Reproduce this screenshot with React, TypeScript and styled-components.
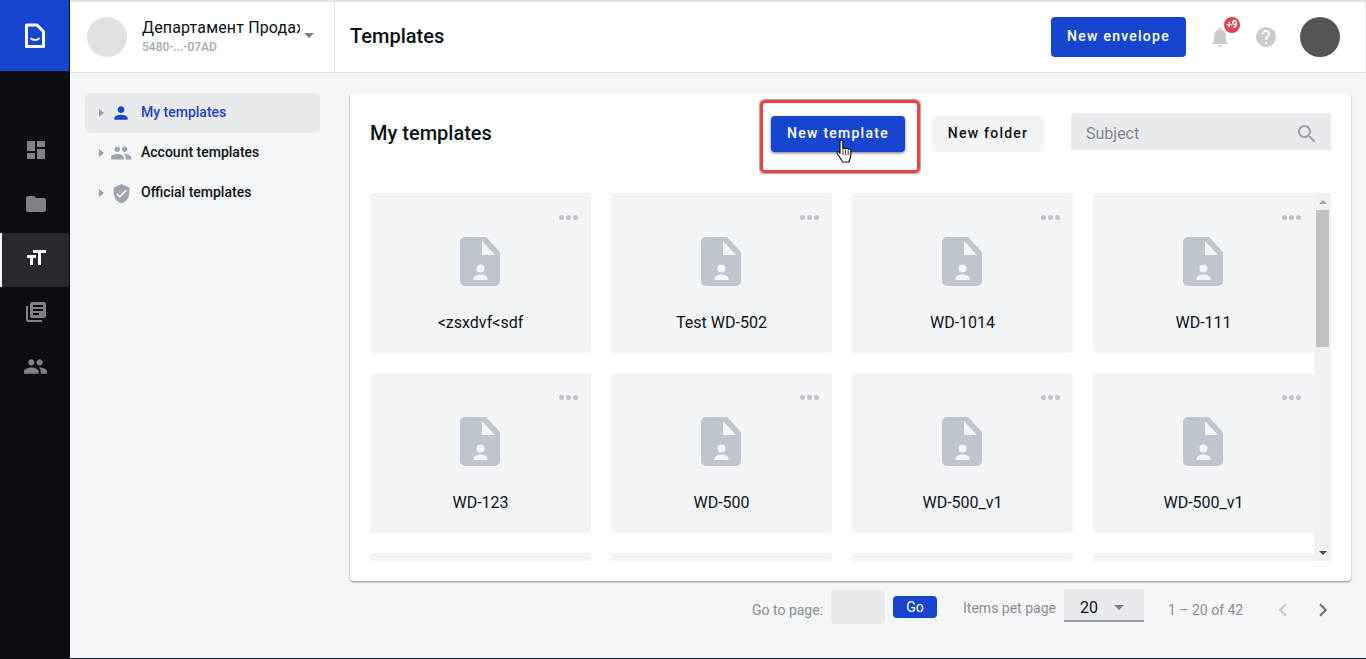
import React from "react";
import styled, { createGlobalStyle } from "styled-components";

const Global = createGlobalStyle`
  html, body { margin: 0; padding: 0; height: 100%; overflow: hidden; }
  body { font-family: Roboto, "Noto Sans", Arial, sans-serif; color: #0d1218; background: #f5f6f8; }
  * { box-sizing: border-box; }
`;

const P = {
  dashboard: "M3 13h8V3H3v10zm0 8h8v-6H3v6zm10 0h8V11h-8v10zm0-18v6h8V3h-8z",
  folder: "M10 4H4c-1.1 0-1.99.9-1.99 2L2 18c0 1.1.9 2 2 2h16c1.1 0 2-.9 2-2V8c0-1.1-.9-2-2-2h-8l-2-2z",
  size: "M9 4v3h5v12h3V7h5V4H9zm-6 8h3v7h3v-7h3V9H3v3z",
  books: "M4 6H2v14c0 1.1.9 2 2 2h14v-2H4V6zm16-4H8c-1.1 0-2 .9-2 2v12c0 1.1.9 2 2 2h12c1.1 0 2-.9 2-2V4c0-1.1-.9-2-2-2zm-1 9H9V9h10v2zm-4 4H9v-2h6v2zm4-8H9V5h10v2z",
  people: "M16 11c1.66 0 2.99-1.34 2.99-3S17.66 5 16 5c-1.66 0-3 1.34-3 3s1.34 3 3 3zm-8 0c1.66 0 2.99-1.34 2.99-3S9.66 5 8 5C6.34 5 5 6.34 5 8s1.34 3 3 3zm0 2c-2.33 0-7 1.17-7 3.5V19h14v-2.5c0-2.33-4.67-3.5-7-3.5zm8 0c-.29 0-.62.02-.97.05 1.16.84 1.97 1.97 1.97 3.45V19h6v-2.5c0-2.33-4.67-3.5-7-3.5z",
  person: "M12 12c2.21 0 4-1.79 4-4s-1.79-4-4-4-4 1.79-4 4 1.79 4 4 4zm0 2c-2.67 0-8 1.34-8 4v2h16v-2c0-2.66-5.33-4-8-4z",
  shield: "M12 1L3 5v6c0 5.55 3.84 10.74 9 12 5.16-1.26 9-6.45 9-12V5l-9-4zm-2 16l-4-4 1.41-1.41L10 14.17l6.59-6.59L18 9l-8 8z",
  bell: "M12 22c1.1 0 2-.9 2-2h-4c0 1.1.89 2 2 2zm6-6v-5c0-3.07-1.64-5.64-4.5-6.32V4c0-.83-.67-1.5-1.5-1.5s-1.5.67-1.5 1.5v.68C7.63 5.36 6 7.92 6 11v5l-2 2v1h16v-1l-2-2z",
  help: "M12 2C6.48 2 2 6.48 2 12s4.48 10 10 10 10-4.48 10-10S17.52 2 12 2zm1 17h-2v-2h2v2zm2.07-7.75l-.9.92C13.45 12.9 13 13.5 13 15h-2v-.5c0-1.1.45-2.1 1.17-2.83l1.24-1.26c.37-.36.59-.86.59-1.41 0-1.1-.9-2-2-2s-2 .9-2 2H8c0-2.21 1.79-4 4-4s4 1.79 4 4c0 .88-.36 1.68-.93 2.25z",
  search: "M15.5 14h-.79l-.28-.27C15.41 12.59 16 11.11 16 9.5 16 5.91 13.09 3 9.5 3S3 5.91 3 9.5 5.91 16 9.5 16c1.61 0 3.09-.59 4.23-1.57l.27.28v.79l5 4.99L20.49 19l-4.99-5zm-6 0C7.01 14 5 11.99 5 9.5S7.01 5 9.5 5 14 7.01 14 9.5 11.99 14 9.5 14z",
  left: "M15.41 7.41L14 6l-6 6 6 6 1.41-1.41L10.83 12z",
  right: "M10 6L8.59 7.41 13.17 12l-4.58 4.59L10 18l6-6z",
};

const Icon = ({ d, size = 24, color }: { d: string; size?: number; color: string }) => (
  <svg width={size} height={size} viewBox="0 0 24 24" fill={color} style={{ display: "block", flexShrink: 0 }}>
    <path d={d} />
  </svg>
);

const Shell = styled.div`
  display: flex;
  width: 1366px;
  height: 659px;
  overflow: hidden;
`;
const Sidebar = styled.nav`
  width: 70px;
  flex-shrink: 0;
  background: #0b0f14;
  display: flex;
  flex-direction: column;
`;
const Logo = styled.div`
  height: 71px;
  width: 69px;
  background: #1646cf;
  display: flex;
  align-items: center;
  justify-content: center;
  margin-bottom: 54px;
`;
const NavItem = styled.div<{ $active?: boolean }>`
  width: 69px;
  height: 54px;
  display: flex;
  align-items: center;
  justify-content: center;
  background: ${(p) => (p.$active ? "#26292e" : "transparent")};
  border-left: 2px solid ${(p) => (p.$active ? "#ffffff" : "transparent")};
  padding-bottom: 4px;
`;
const Column = styled.div`
  flex: 1;
  min-width: 0;
  display: flex;
  flex-direction: column;
  border-bottom: 1px solid #14202c;
`;
const Header = styled.header`
  height: 73px;
  flex-shrink: 0;
  background: #fff;
  border-top: 2px solid #e0e2e7;
  border-bottom: 1px solid #dfe1e6;
  border-right: 1px solid #e6e8eb;
  display: flex;
  align-items: center;
`;
const Org = styled.div`
  width: 265px;
  height: 100%;
  border-right: 1px solid #dfe1e6;
  display: flex;
  align-items: center;
  padding-left: 17px;
  padding-bottom: 1px;
`;
const OrgAvatar = styled.div`
  width: 40px;
  height: 40px;
  border-radius: 50%;
  background: #dfe2e5;
  flex-shrink: 0;
`;
const OrgInfo = styled.div`
  width: 158px;
  margin-left: 15px;
  overflow: hidden;
`;
const OrgName = styled.div`
  font-size: 16px;
  line-height: 20px;
  letter-spacing: 0.15px;
  white-space: nowrap;
  overflow: hidden;
  margin-top: -1px;
`;
const OrgId = styled.div`
  font-size: 12px;
  line-height: 14px;
  margin-top: 2px;
  font-weight: 500;
  color: #a5a9ae;
`;
const Caret = styled.div<{ $color?: string }>`
  width: 0;
  height: 0;
  border-left: 5px solid transparent;
  border-right: 5px solid transparent;
  border-top: 5px solid ${(p) => p.$color || "#7c7f84"};
`;
const OrgCaret = styled(Caret)`
  margin: 0 0 2px 4px;
`;
const PageTitle = styled.h1`
  flex: 1;
  margin: 0 0 0 15px;
  font-size: 20px;
  font-weight: 500;
  line-height: 24px;
  padding-bottom: 2px;
`;
const Button = styled.button<{ $variant?: "primary" | "soft" }>`
  height: 36px;
  border: 0;
  border-radius: 4px;
  font-family: inherit;
  font-size: 14px;
  font-weight: 500;
  letter-spacing: 1.25px;
  padding: 0 0 2px;
  text-align: center;
  background: ${(p) => (p.$variant === "soft" ? "#f3f4f6" : "#1646cf")};
  color: ${(p) => (p.$variant === "soft" ? "#0d1218" : "#fff")};
`;
const EnvelopeButton = styled(Button)`
  width: 135px;
  height: 40px;
  margin-bottom: 1px;
`;
const HeaderTools = styled.div`
  display: flex;
  align-items: center;
  margin-right: 25px;
`;
const BellWrap = styled.div`
  position: relative;
  margin-left: 22px;
`;
const Badge = styled.span`
  position: absolute;
  top: -8px;
  left: 16px;
  width: 16px;
  height: 16px;
  border-radius: 50%;
  background: #e0444c;
  color: #fff;
  font-size: 10px;
  font-weight: 700;
  line-height: 16px;
  text-align: center;
`;
const HelpWrap = styled.div`
  margin-left: 22px;
`;
const UserAvatar = styled.div`
  width: 40px;
  height: 40px;
  border-radius: 50%;
  background: #555;
  margin-left: 22px;
`;
const Body = styled.div`
  flex: 1;
  display: flex;
  min-height: 0;
  padding-top: 20px;
  background: #f5f6f8;
`;
const Tree = styled.ul`
  list-style: none;
  width: 235px;
  margin: 0 30px 0 15px;
  padding: 0;
  flex-shrink: 0;
`;
const TreeRow = styled.li<{ $active?: boolean }>`
  height: 40px;
  display: flex;
  align-items: center;
  border-radius: 6px;
  padding-left: 14px;
  font-size: 14px;
  font-weight: 500;
  background: ${(p) => (p.$active ? "#e9eaee" : "transparent")};
  color: ${(p) => (p.$active ? "#2444cc" : "#0d1218")};
`;
const TreeArrow = styled.span`
  width: 0;
  height: 0;
  border-top: 4px solid transparent;
  border-bottom: 4px solid transparent;
  border-left: 5px solid #9aa0a8;
  margin-right: 5px;
`;
const TreeIcon = styled.span`
  width: 24px;
  display: flex;
  justify-content: center;
  margin-right: 8px;
`;
const TreeLabel = styled.span`
  margin-top: -2px;
`;
const Content = styled.main`
  width: 1001px;
  display: flex;
  flex-direction: column;
`;
const Panel = styled.section`
  height: 488px;
  background: #fff;
  border-radius: 4px;
  box-shadow: 0 1px 2px rgba(0, 0, 0, 0.45);
  padding: 20px;
`;
const PanelHead = styled.div`
  height: 40px;
  display: flex;
  align-items: flex-start;
  gap: 27px;
  margin-bottom: 40px;
`;
const PanelTitle = styled.h2`
  flex: 1;
  margin: 0;
  font-size: 20px;
  line-height: 40px;
  font-weight: 500;
`;
const TemplateButtonWrap = styled.div`
  position: relative;
  margin-top: 3px;
`;
const PrimaryAction = styled(Button)`
  width: 134px;
  display: block;
  box-shadow: 0 1px 3px rgba(0, 0, 0, 0.55);
`;
const Highlight = styled.div`
  position: absolute;
  left: -11px;
  top: -16px;
  width: 160px;
  height: 73px;
  border: 3px solid #ef4044;
  border-radius: 5px;
  box-shadow: 0 0 1px 0.5px rgba(90, 90, 90, 0.55);
  pointer-events: none;
`;
const Pointer = styled.svg`
  position: absolute;
  left: 65px;
  top: 23px;
`;
const FolderButton = styled(Button)`
  width: 112px;
  margin-top: 3px;
`;
const Search = styled.div`
  width: 260px;
  height: 37px;
  background: #e9eaee;
  border-radius: 4px 4px 0 0;
  display: flex;
  align-items: center;
  justify-content: space-between;
  padding: 4px 12px 0 15px;
  font-size: 16px;
  color: #83878c;
`;
const Viewport = styled.div`
  height: 368px;
  display: flex;
`;
const CardsClip = styled.div`
  flex: 1;
  overflow: hidden;
`;
const Cards = styled.div`
  display: grid;
  grid-template-columns: repeat(4, 221px);
  gap: 20px;
`;
const Card = styled.article`
  height: 160px;
  position: relative;
  border-radius: 4px;
  background: #f3f4f6;
  display: flex;
  flex-direction: column;
  align-items: center;
  padding-top: 44px;
`;
const GlyphBox = styled.div`
  margin-right: 1px;
`;
const Dots = styled.div`
  position: absolute;
  top: 22px;
  right: 13px;
  display: flex;
  gap: 2px;
  span {
    width: 5px;
    height: 5px;
    border-radius: 50%;
    background: #bfc4cc;
  }
`;
const CardName = styled.div`
  margin-top: 27px;
  font-size: 16px;
  line-height: 20px;
`;
const Track = styled.div`
  width: 17px;
  background: #f1f1f1;
  display: flex;
  flex-direction: column;
  align-items: center;
`;
const ScrollEnd = styled.div`
  height: 17px;
  display: flex;
  align-items: center;
  justify-content: center;
`;
const ArrowUp = styled.div`
  width: 0;
  height: 0;
  border-left: 4px solid transparent;
  border-right: 4px solid transparent;
  border-bottom: 4px solid #a3a3a3;
`;
const ArrowDown = styled.div`
  width: 0;
  height: 0;
  border-left: 4px solid transparent;
  border-right: 4px solid transparent;
  border-top: 4px solid #505050;
`;
const Thumb = styled.div`
  width: 13px;
  height: 137px;
  background: #c1c1c1;
`;
const TrackGap = styled.div`
  flex: 1;
`;
const Pager = styled.div`
  display: flex;
  align-items: flex-start;
  margin-top: 8px;
  padding-left: 402px;
  font-size: 14px;
  color: #8a8d91;
`;
const PagerLabel = styled.span<{ $top: number }>`
  margin-top: ${(p) => p.$top}px;
  line-height: 18px;
  white-space: nowrap;
`;
const PageInput = styled.div`
  width: 54px;
  height: 34px;
  margin: 1px 0 0 8px;
  border-radius: 4px;
  background: #e9eaee;
`;
const GoButton = styled.button`
  width: 44px;
  height: 22px;
  margin: 7px 26px 0 8px;
  border: 0;
  padding: 0;
  border-radius: 4px;
  background: #1646cf;
  color: #fff;
  font-family: inherit;
  font-size: 14px;
`;
const PerPage = styled.div`
  width: 80px;
  height: 33px;
  margin: 0 24px 0 8px;
  background: #e9eaee;
  border-bottom: 2px solid #9aa0a8;
  display: flex;
  align-items: center;
  justify-content: space-between;
  padding: 5px 20px 0 16px;
  color: #0d1218;
  font-size: 16px;
`;
const PagerArrows = styled.div`
  display: flex;
  gap: 14px;
  margin: 8px 0 0 27px;
`;

const TemplateGlyph = () => (
  <svg width="40" height="49" viewBox="0 0 40 49" style={{ display: "block" }}>
    <path d="M5 0h20a3 3 0 0 1 2 1l12 13a3 3 0 0 1 1 2v28a5 5 0 0 1-5 5H5a5 5 0 0 1-5-5V5a5 5 0 0 1 5-5z" fill="#bfc5ce" />
    <path d="M22 4v14h13z" fill="#f3f4f6" />
    <circle cx="20.5" cy="31.5" r="4" fill="#f3f4f6" />
    <path d="M13.5 43v-1.5c0-2.6 4.500-4 7-4s7 1.400 7 4V43z" fill="#f3f4f6" />
  </svg>
);

const names = ["<zsxdvf<sdf", "Test WD-502", "WD-1014", "WD-111", "WD-123", "WD-500", "WD-500_v1", "WD-500_v1", "", "", "", ""];

export default function App() {
  return (
    <Shell>
      <Global />
      <Sidebar>
        <Logo>
          <svg width="24" height="28" viewBox="0 0 24 28" fill="none" stroke="#fff" strokeWidth="3" strokeLinejoin="round">
            <path d="M3.500 3h10.500l6.500 6.500V24.500H3.500z" />
            <path d="M8 16.500c2.200 2 5.800 2 8 0" strokeLinecap="round" strokeWidth="1.800" />
          </svg>
        </Logo>
        <NavItem><Icon d={P.dashboard} color="#808285" /></NavItem>
        <NavItem><Icon d={P.folder} color="#808285" /></NavItem>
        <NavItem $active><Icon d={P.size} color="#ffffff" /></NavItem>
        <NavItem><Icon d={P.books} color="#808285" /></NavItem>
        <NavItem><Icon d={P.people} color="#808285" size={25} /></NavItem>
      </Sidebar>
      <Column>
        <Header>
          <Org>
            <OrgAvatar />
            <OrgInfo>
              <OrgName>Департамент Продаж</OrgName>
              <OrgId>5480-...-07AD</OrgId>
            </OrgInfo>
            <OrgCaret />
          </Org>
          <PageTitle>Templates</PageTitle>
          <HeaderTools>
            <EnvelopeButton>New envelope</EnvelopeButton>
            <BellWrap>
              <Icon d={P.bell} color="#cccccc" />
              <Badge>+9</Badge>
            </BellWrap>
            <HelpWrap><Icon d={P.help} color="#cccccc" /></HelpWrap>
            <UserAvatar />
          </HeaderTools>
        </Header>
        <Body>
          <Tree>
            <TreeRow $active>
              <TreeArrow />
              <TreeIcon><Icon d={P.person} color="#1646cf" size={20} /></TreeIcon>
              <TreeLabel>My templates</TreeLabel>
            </TreeRow>
            <TreeRow>
              <TreeArrow />
              <TreeIcon><Icon d={P.people} color="#9ea4ad" size={22} /></TreeIcon>
              <TreeLabel>Account templates</TreeLabel>
            </TreeRow>
            <TreeRow>
              <TreeArrow />
              <TreeIcon><Icon d={P.shield} color="#9ea4ad" size={21} /></TreeIcon>
              <TreeLabel>Official templates</TreeLabel>
            </TreeRow>
          </Tree>
          <Content>
            <Panel>
              <PanelHead>
                <PanelTitle>My templates</PanelTitle>
                <TemplateButtonWrap>
                  <PrimaryAction>New template</PrimaryAction>
                  <Highlight />
                  <Pointer width="18" height="25" viewBox="0 0 18 25">
                    <path
                      d="M4 2.500c0-1.900 2.800-1.900 2.800 0V10c0-1 2.600-1.200 2.800 0 .2-1 2.500-1 2.700.3.300-.9 2.500-.7 2.500.7 0 3 .4 5.500-.4 7.500-.6 1.800-1.300 2.700-1.300 4.500H6.500c-.3-2-2.500-4-4-6.500C1.500 15 .5 13.600 1 13c.8-1 2.200 0 3 1.500z"
                      fill="#fff"
                      stroke="#151515"
                      strokeWidth="1.200"
                      strokeLinejoin="round"
                    />
                    <path d="M7 11v5M9.600 11v5M12.200 11.500V16" stroke="#151515" strokeWidth="0.900" />
                  </Pointer>
                </TemplateButtonWrap>
                <FolderButton $variant="soft">New folder</FolderButton>
                <Search>
                  Subject
                  <Icon d={P.search} color="#9aa0a8" />
                </Search>
              </PanelHead>
              <Viewport>
                <CardsClip>
                  <Cards>
                    {names.map((name, i) => (
                      <Card key={i}>
                        <Dots><span /><span /><span /></Dots>
                        <GlyphBox><TemplateGlyph /></GlyphBox>
                        <CardName>{name}</CardName>
                      </Card>
                    ))}
                  </Cards>
                </CardsClip>
                <Track>
                  <ScrollEnd><ArrowUp /></ScrollEnd>
                  <Thumb />
                  <TrackGap />
                  <ScrollEnd><ArrowDown /></ScrollEnd>
                </Track>
              </Viewport>
            </Panel>
            <Pager>
              <PagerLabel $top={12}>Go to page:</PagerLabel>
              <PageInput />
              <GoButton>Go</GoButton>
              <PagerLabel $top={10}>Items pet page</PagerLabel>
              <PerPage>20<Caret /></PerPage>
              <PagerLabel $top={12}>1 – 20 of 42</PagerLabel>
              <PagerArrows>
                <Icon d={P.left} color="#c6c8cc" size={26} />
                <Icon d={P.right} color="#6f7378" size={26} />
              </PagerArrows>
            </Pager>
          </Content>
        </Body>
      </Column>
    </Shell>
  );
}
